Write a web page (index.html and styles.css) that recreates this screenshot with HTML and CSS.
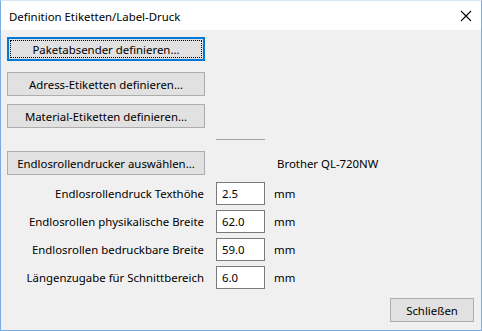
FILE: index.html
```html
<!DOCTYPE html>
<html lang="de">
<head>
    <meta charset="UTF-8">
    <title>Definition Etiketten/Label-Druck</title>
    <link rel="stylesheet" href="styles.css">
</head>
<body>
    <div class="window">
        <div class="title-bar">
            <span class="title">Definition Etiketten/Label-Druck</span>
            <svg class="close" width="12" height="12" viewBox="0 0 12 12">
                <path d="M1 1 L11 11 M11 1 L1 11" stroke="#000" stroke-width="1.1" fill="none"/>
            </svg>
        </div>
        <div class="content">
            <div class="row r-btn1">
                <button class="btn focused">Paketabsender definieren...</button>
            </div>
            <div class="row r-btn2">
                <button class="btn">Adress-Etiketten definieren...</button>
            </div>
            <div class="row r-btn3">
                <button class="btn">Material-Etiketten definieren...</button>
            </div>
            <div class="row r-sep">
                <div class="separator"></div>
            </div>
            <div class="row r-btn4">
                <button class="btn">Endlosrollendrucker auswählen...</button>
                <span class="printer">Brother QL-720NW</span>
            </div>
            <div class="row field">
                <label>Endlosrollendruck Texthöhe</label>
                <input type="text" value="2.5">
                <span class="unit">mm</span>
            </div>
            <div class="row field">
                <label>Endlosrollen physikalische Breite</label>
                <input type="text" value="62.0">
                <span class="unit">mm</span>
            </div>
            <div class="row field">
                <label>Endlosrollen bedruckbare Breite</label>
                <input type="text" value="59.0">
                <span class="unit">mm</span>
            </div>
            <div class="row field">
                <label>Längenzugabe für Schnittbereich</label>
                <input type="text" value="6.0">
                <span class="unit">mm</span>
            </div>
            <div class="footer">
                <button class="btn close-btn">Schließen</button>
            </div>
        </div>
    </div>
</body>
</html>
```

FILE: styles.css
```css
body {
    margin: 0;
    font-family: "Noto Sans", "Open Sans", sans-serif;
    font-size: 11.4px;
    color: #000;
}
.window {
    width: 482px;
    height: 331px;
    box-sizing: border-box;
    border: 1px solid #79ace2;
    border-top-color: #d8e6f5;
    background: #f0f0f0;
    display: flex;
    flex-direction: column;
}
.title-bar {
    height: 29px;
    background: #fff;
    display: flex;
    align-items: center;
    justify-content: space-between;
    padding: 0 9px 0 8px;
}
.title {
    margin-top: 1px;
}
.close {
    display: block;
    margin-top: 1px;
}
.content {
    padding: 7px 7px 0 6px;
    display: flex;
    flex-direction: column;
}
.row {
    display: grid;
    grid-template-columns: 198px 11px 49px 1fr;
    align-items: center;
}
.btn {
    font: inherit;
    color: #000;
    height: 24px;
    background: #e1e1e1;
    border: 1px solid #adadad;
    padding: 0;
    margin: 0;
}
.btn.focused {
    border-color: #0078d7;
    box-shadow: inset 0 0 0 1px #0078d7;
    outline: 1px dotted #000;
    outline-offset: -4px;
}
.r-btn2 {
    margin-top: 11px;
}
.r-btn3 {
    margin-top: 8px;
}
.r-sep {
    height: 23px;
}
.separator {
    grid-column: 3;
    height: 1px;
    background: #a0a0a0;
}
.printer {
    grid-column: 4;
    padding-left: 12px;
}
.field {
    margin-top: 5px;
}
.r-btn4 + .field {
    margin-top: 7px;
}
.field label {
    text-align: right;
    padding-right: 1px;
}
.field input {
    grid-column: 3;
    font: inherit;
    color: #000;
    width: 49px;
    height: 23px;
    box-sizing: border-box;
    border: 1px solid #7a7a7a;
    background: #fff;
    padding: 0 0 0 5px;
    margin: 0;
}
.unit {
    padding-left: 9px;
}
.footer {
    display: flex;
    justify-content: flex-end;
    margin-top: 9px;
}
.close-btn {
    width: 84px;
}
```
